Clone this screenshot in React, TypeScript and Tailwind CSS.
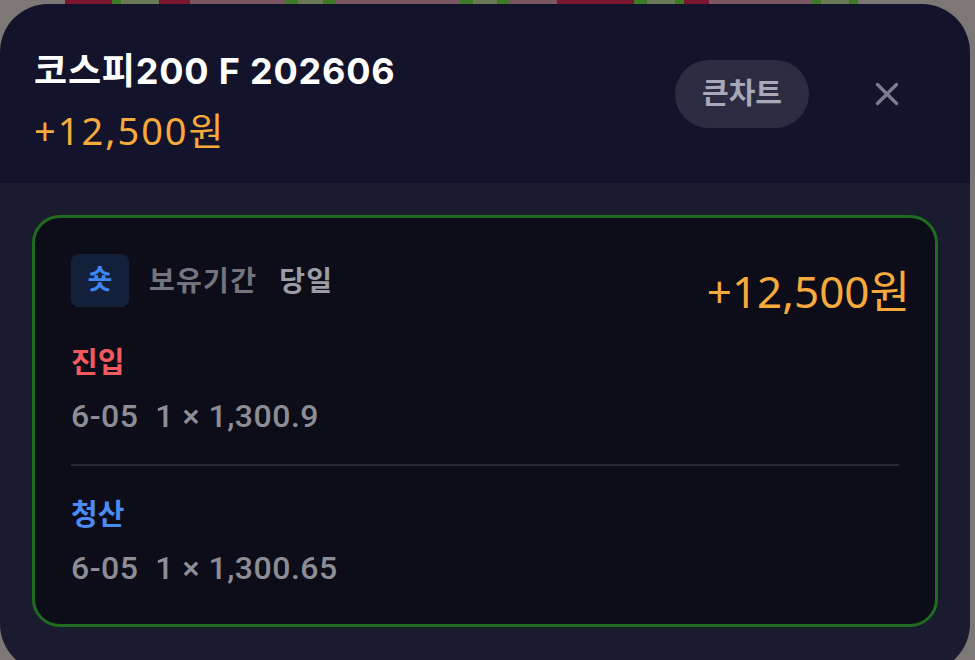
import { X } from 'lucide-react';

// chart candles that peek out above the sheet
const candles: { w: string; c: string }[] = [
  { w: 'w-[65px]', c: 'bg-[#7d7775]' },
  { w: 'w-[47px]', c: 'bg-[#7a1530]' },
  { w: 'w-[9px]', c: 'bg-[#3d7a26]' },
  { w: 'w-[38px]', c: 'bg-[#6b7a55]' },
  { w: 'w-[31px]', c: 'bg-[#7a1530]' },
  { w: 'w-[96px]', c: 'bg-[#7a5663]' },
  { w: 'w-[12px]', c: 'bg-[#3d7a26]' },
  { w: 'w-[25px]', c: 'bg-[#6b7a55]' },
  { w: 'w-[13px]', c: 'bg-[#3d7a26]' },
  { w: 'w-[124px]', c: 'bg-[#7a5663]' },
  { w: 'w-[13px]', c: 'bg-[#3d7a26]' },
  { w: 'w-[24px]', c: 'bg-[#6b7a55]' },
  { w: 'w-[13px]', c: 'bg-[#3d7a26]' },
  { w: 'w-[47px]', c: 'bg-[#7a5663]' },
  { w: 'w-[77px]', c: 'bg-[#7a1530]' },
  { w: 'w-[13px]', c: 'bg-[#3d7a26]' },
  { w: 'w-[28px]', c: 'bg-[#6b7a55]' },
  { w: 'w-[9px]', c: 'bg-[#3d7a26]' },
  { w: 'w-[25px]', c: 'bg-[#7a1530]' },
  { w: 'w-[103px]', c: 'bg-[#7a5663]' },
  { w: 'w-[9px]', c: 'bg-[#3d7a26]' },
  { w: 'w-[28px]', c: 'bg-[#6b7a55]' },
  { w: 'w-[9px]', c: 'bg-[#3d7a26]' },
];

const kr = "font-['Inter','Noto_Sans_CJK_KR',sans-serif]";
const num = "font-['Roboto','Noto_Sans_CJK_KR',sans-serif]";
const amt = "font-['Noto_Sans','Noto_Sans_CJK_KR',sans-serif]";

function Fill({ label, color, date, qty, price }: { label: string; color: string; date: string; qty: number; price: string }) {
  return (
    <div>
      <div className={`${kr} ${color} text-[29px] leading-[36px] font-bold`}>{label}</div>
      <div className={`${num} mt-[17px] text-[32px] leading-[36px] font-medium tracking-[0.5px] text-[#8d8d96] whitespace-pre`}>
        {`${date}  ${qty} × ${price}`}
      </div>
    </div>
  );
}

export default function App() {
  return (
    <div className="relative h-[660px] w-[975px] overflow-hidden bg-[#7d7775]">
      <div className="flex h-[8px]">
        {candles.map((s, i) => (
          <div key={i} className={`${s.w} ${s.c} h-full`} />
        ))}
      </div>

      <div className="absolute left-0 top-[4px] flex h-[668px] w-[970px] flex-col overflow-hidden rounded-[48px]">
        {/* header */}
        <div className="flex h-[179px] justify-between bg-[#13132b]">
          <div className="pl-[34px] pt-[46px]">
            <div className={`${kr} text-[36px] leading-[42px] font-bold tracking-[0.8px] text-white`}>코스피200 F 202606</div>
            <div className={`${amt} mt-[14px] text-[38px] leading-[48px] tracking-[2px] text-[#f7aa3c]`}>+12,500원</div>
          </div>
          <div className="flex items-start gap-[52px] pr-[57px] pt-[56px]">
            <button className={`${kr} h-[68px] w-[134px] rounded-full bg-[#2b2c42] text-[29px] font-bold text-[#a8a8b6]`}>
              큰차트
            </button>
            <div className="mt-[8px] flex h-[52px] w-[52px] items-center justify-center text-[#7c7c8c]">
              <X size={38} strokeWidth={2.1} />
            </div>
          </div>
        </div>

        {/* body */}
        <div className="flex-1 bg-[#1a1b2e] px-[32px] pt-[32px]">
          <div className="h-[412px] rounded-[28px] border-[3px] border-[#1f6b20] bg-[#0c0d18] px-[36px] pt-[36px]">
            <div className="flex items-start justify-between">
              <div className="flex items-center">
                <div className={`${kr} flex h-[53px] w-[58px] items-center justify-center rounded-[8px] bg-[#14203a] text-[27px] font-bold text-[#3f86f3]`}>
                  숏
                </div>
                <span className={`${kr} ml-[20px] text-[28px] font-semibold tracking-[1.3px] text-[#74747e]`}>보유기간</span>
                <span className={`${kr} ml-[22px] text-[28px] font-semibold tracking-[1.3px] text-[#9c9ca6]`}>당일</span>
              </div>
              <div className={`${amt} -mr-[11px] mt-[11px] text-[44px] leading-[52px] text-[#f7aa3c]`}>+12,500원</div>
            </div>

            <div className="mt-[28px]">
              <Fill label="진입" color="text-[#f25a5f]" date="6-05" qty={1} price="1,300.9" />
            </div>
            <div className="mt-[30px] h-[2px] bg-[#272733]" />
            <div className="mt-[31px]">
              <Fill label="청산" color="text-[#4a8cf2]" date="6-05" qty={1} price="1,300.65" />
            </div>
          </div>
        </div>
      </div>
    </div>
  );
}
